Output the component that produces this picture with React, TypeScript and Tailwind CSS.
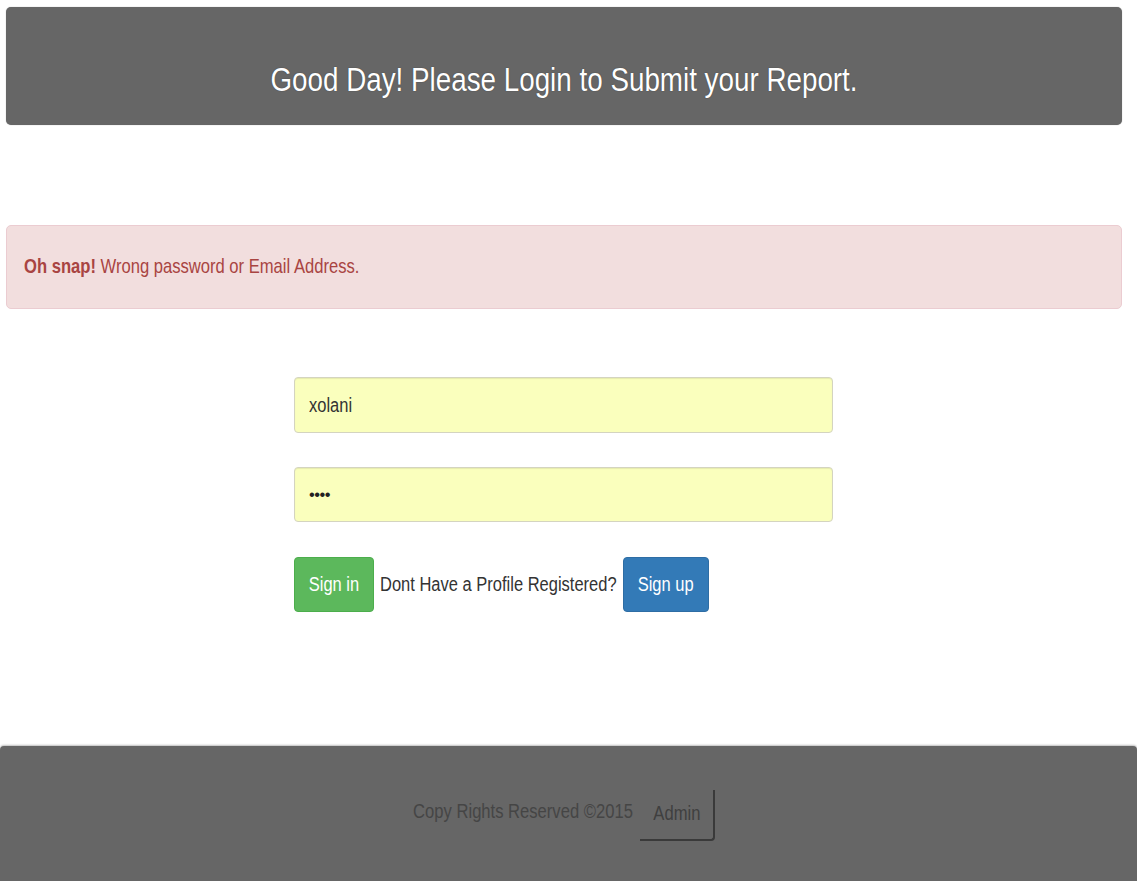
export default function App() {
  return (
    <div className="min-h-screen bg-white font-['Liberation_Sans',Arial,sans-serif] text-[#333]">
      <div className="pt-[7px] pl-[6px] pr-[15px]">
        <header className="flex h-[118px] items-center justify-center rounded-[5px] bg-[#666666] pt-[28px] shadow-[0_0_1px_rgba(0,0,0,0.4)]">
          <h1 className="inline-block scale-y-[1.2] text-[27.8px] leading-none text-white [text-shadow:0_0_1px_rgba(0,0,0,0.5)]">
            Good Day! Please Login to Submit your Report.
          </h1>
        </header>

        <div className="mt-[100px] flex h-[84px] items-center rounded-[5px] border border-[#ebccd1] bg-[#f2dede] px-[17px] text-[#a94442]">
          <span className="inline-block scale-y-[1.2] text-[16.6px] leading-none">
            <strong>Oh snap!</strong> Wrong password or Email Address.
          </span>
        </div>

        <div className="ml-[288px] mt-[68px] w-[539px]">
          <div className="flex h-[56px] items-center rounded-[4px] border border-[#d4d4c0] bg-[#faffbd] px-[14px] shadow-[inset_0_1px_1px_rgba(0,0,0,0.08)]">
            <span className="inline-block scale-y-[1.2] text-[16.5px] leading-none text-[#333]">xolani</span>
          </div>
          <div className="mt-[34px] flex h-[55px] items-center rounded-[4px] border border-[#d4d4c0] bg-[#faffbd] px-[14px] shadow-[inset_0_1px_1px_rgba(0,0,0,0.08)]">
            <span className="inline-block text-[16.5px] leading-none tracking-[-0.5px] text-[#222]">••••</span>
          </div>

          <div className="mt-[35px] flex items-center gap-[5px]">
            <button className="flex h-[55px] w-[80px] items-center justify-center rounded-[4px] border border-[#4cae4c] bg-[#5cb85c] text-white">
              <span className="inline-block scale-y-[1.2] text-[16.5px] leading-none">Sign in</span>
            </button>
            <span className="ml-[1px] inline-block scale-y-[1.2] text-[16.5px] leading-none text-[#333]">
              Dont Have a Profile Registered?
            </span>
            <button className="ml-[1px] flex h-[55px] w-[86px] items-center justify-center rounded-[4px] border border-[#2e6da4] bg-[#337ab7] text-white">
              <span className="inline-block scale-y-[1.2] text-[16.5px] leading-none">Sign up</span>
            </button>
          </div>
        </div>
      </div>

      <footer className="mt-[134px] flex h-[140px] items-start justify-center gap-[7px] rounded-t-[4px] bg-[#666666] pl-[6px] pr-[15px] pt-[44px] shadow-[0_-1px_2px_rgba(0,0,0,0.25)]">
        <span className="mt-[14px] inline-block scale-y-[1.2] text-[16.6px] leading-none text-[#454545]">
          Copy Rights Reserved ©2015
        </span>
        <div className="flex h-[51px] w-[75px] items-center justify-center rounded-br-[4px] border-r-2 border-b-2 border-[#3a3a3a] pl-[1px]">
          <span className="inline-block scale-y-[1.2] text-[16.6px] leading-none text-[#3f3f3f]">Admin</span>
        </div>
      </footer>
    </div>
  )
}
